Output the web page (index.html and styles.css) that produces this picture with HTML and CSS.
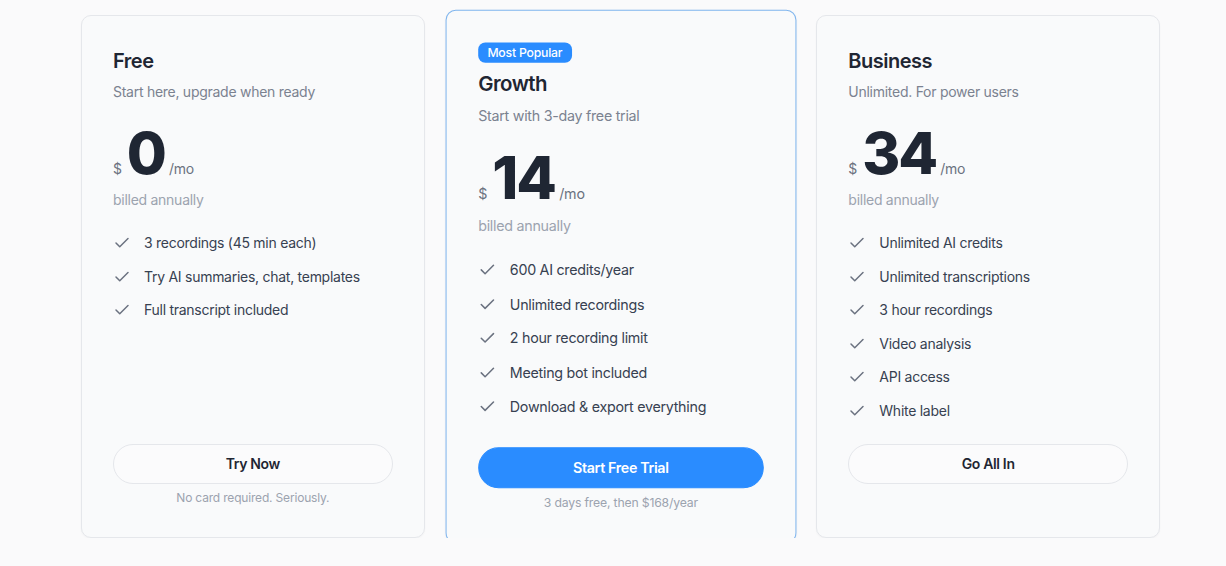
FILE: index.html
```html
<!DOCTYPE html>
<html lang="en">
<head>
<meta charset="utf-8">
<title>Pricing</title>
<link rel="stylesheet" href="styles.css">
</head>
<body>
<main class="plans">
  <section class="card">
    <h2 class="name">Free</h2>
    <p class="tagline">Start here, upgrade when ready</p>
    <div class="price"><span class="cur">$</span><span class="amount">0</span><span class="per">/mo</span></div>
    <p class="billed">billed annually</p>
    <ul class="features">
      <li><svg class="check" viewBox="0 0 24 24"><path d="M20 6 9 17l-5-5"/></svg>3 recordings (45 min each)</li>
      <li><svg class="check" viewBox="0 0 24 24"><path d="M20 6 9 17l-5-5"/></svg>Try AI summaries, chat, templates</li>
      <li><svg class="check" viewBox="0 0 24 24"><path d="M20 6 9 17l-5-5"/></svg>Full transcript included</li>
    </ul>
    <button class="btn btn-outline">Try Now</button>
    <p class="note">No card required. Seriously.</p>
  </section>

  <section class="card card-featured">
    <span class="badge">Most Popular</span>
    <h2 class="name">Growth</h2>
    <p class="tagline">Start with 3-day free trial</p>
    <div class="price"><span class="cur">$</span><span class="amount">14</span><span class="per">/mo</span></div>
    <p class="billed">billed annually</p>
    <ul class="features">
      <li><svg class="check" viewBox="0 0 24 24"><path d="M20 6 9 17l-5-5"/></svg>600 AI credits/year</li>
      <li><svg class="check" viewBox="0 0 24 24"><path d="M20 6 9 17l-5-5"/></svg>Unlimited recordings</li>
      <li><svg class="check" viewBox="0 0 24 24"><path d="M20 6 9 17l-5-5"/></svg>2 hour recording limit</li>
      <li><svg class="check" viewBox="0 0 24 24"><path d="M20 6 9 17l-5-5"/></svg>Meeting bot included</li>
      <li><svg class="check" viewBox="0 0 24 24"><path d="M20 6 9 17l-5-5"/></svg>Download &amp; export everything</li>
    </ul>
    <button class="btn btn-primary">Start Free Trial</button>
    <p class="note">3 days free, then $168/year</p>
  </section>

  <section class="card">
    <h2 class="name">Business</h2>
    <p class="tagline">Unlimited. For power users</p>
    <div class="price"><span class="cur">$</span><span class="amount">34</span><span class="per">/mo</span></div>
    <p class="billed">billed annually</p>
    <ul class="features">
      <li><svg class="check" viewBox="0 0 24 24"><path d="M20 6 9 17l-5-5"/></svg>Unlimited AI credits</li>
      <li><svg class="check" viewBox="0 0 24 24"><path d="M20 6 9 17l-5-5"/></svg>Unlimited transcriptions</li>
      <li><svg class="check" viewBox="0 0 24 24"><path d="M20 6 9 17l-5-5"/></svg>3 hour recordings</li>
      <li><svg class="check" viewBox="0 0 24 24"><path d="M20 6 9 17l-5-5"/></svg>Video analysis</li>
      <li><svg class="check" viewBox="0 0 24 24"><path d="M20 6 9 17l-5-5"/></svg>API access</li>
      <li><svg class="check" viewBox="0 0 24 24"><path d="M20 6 9 17l-5-5"/></svg>White label</li>
    </ul>
    <button class="btn btn-outline">Go All In</button>
    <p class="note"></p>
  </section>
</main>
</body>
</html>
```

FILE: styles.css
```css
* { box-sizing: border-box; }

html, body {
  margin: 0;
  padding: 0;
  background: #fafafb;
  font-family: Inter, "Noto Sans", "Liberation Sans", sans-serif;
  color: #1f2937;
}

.plans {
  display: flex;
  gap: 24px;
  padding: 15px 66px 0 81px;
  align-items: stretch;
}

.card {
  flex: 1 1 0;
  min-width: 0;
  display: flex;
  flex-direction: column;
  align-items: flex-start;
  padding: 31px 31px 31px;
  background: #f9fafb;
  border: 1px solid #e5e7eb;
  border-radius: 10px;
  box-shadow: 0 1px 2px rgba(17, 24, 39, 0.03);
}

.card-featured {
  border: 1.5px solid #7fb5ee;
  transform: scale(1.02);
  background: #f9fafb;
}

.badge {
  display: inline-block;
  background: #2a8cff;
  color: #ffffff;
  font-size: 12px;
  line-height: 16px;
  font-weight: 500;
  letter-spacing: -0.2px;
  padding: 2px 9px;
  border-radius: 7px;
  margin-bottom: 7px;
}

.name {
  margin: 0;
  font-size: 20px;
  line-height: 28px;
  font-weight: 600;
  letter-spacing: -0.5px;
  color: #1f2633;
}

.tagline {
  margin: 7px 0 0;
  font-size: 14px;
  line-height: 20px;
  letter-spacing: -0.27px;
  color: #7b8290;
}

.price {
  display: flex;
  align-items: baseline;
  gap: 5px;
  margin-top: 22px;
}

.cur, .per {
  font-size: 14px;
  color: #6b7280;
  letter-spacing: -0.2px;
}

.amount {
  font-size: 58px;
  line-height: 58px;
  font-weight: 800;
  letter-spacing: -2px;
  margin-right: -1px;
  color: #1f2633;
}

.billed {
  margin: 8px 0 0;
  font-size: 14px;
  line-height: 20px;
  letter-spacing: -0.27px;
  color: #9ca3af;
}

.features {
  list-style: none;
  margin: 23px 0 23px;
  padding: 0;
  display: flex;
  flex-direction: column;
  gap: 13.6px;
}

.features li {
  display: flex;
  align-items: center;
  gap: 13px;
  font-size: 14px;
  line-height: 20px;
  letter-spacing: -0.27px;
  color: #374151;
}

.check {
  width: 18px;
  height: 18px;
  flex: none;
  fill: none;
  stroke: #6b7280;
  stroke-width: 2;
  stroke-linecap: round;
  stroke-linejoin: round;
}

.btn {
  margin-top: auto;
  width: 100%;
  height: 40px;
  border-radius: 999px;
  font-family: inherit;
  font-size: 14px;
  font-weight: 600;
  letter-spacing: -0.35px;
  cursor: pointer;
}

.btn-outline {
  background: #fbfbfc;
  border: 1px solid #e5e7eb;
  color: #1f2633;
}

.btn-primary {
  background: #2a8cff;
  border: 1px solid #2a8cff;
  color: #ffffff;
}

.note {
  align-self: stretch;
  text-align: center;
  margin: 6px 0 0;
  font-size: 12px;
  line-height: 16px;
  min-height: 16px;
  letter-spacing: -0.18px;
  color: #9ca3af;
}
```
